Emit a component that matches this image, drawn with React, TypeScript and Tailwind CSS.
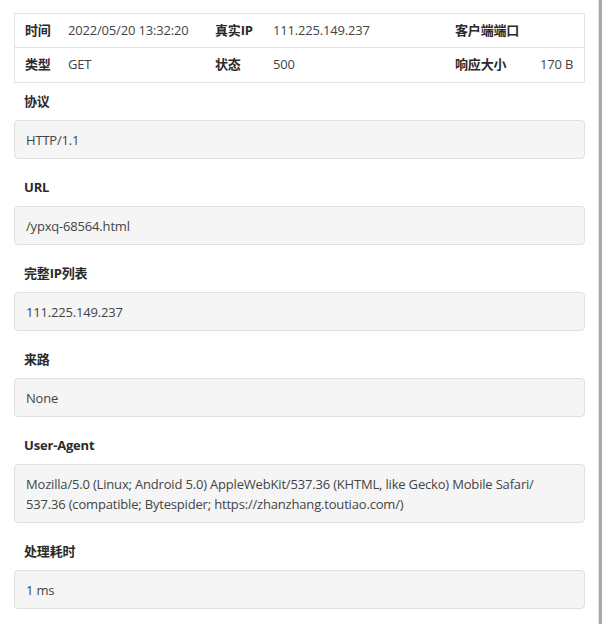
import type { ReactNode } from 'react';

const font = { fontFamily: '"Open Sans", "Noto Sans CJK SC", sans-serif' };

type Field = { label: string; value: ReactNode };

const fields: Field[] = [
  { label: '协议', value: 'HTTP/1.1' },
  { label: 'URL', value: '/ypxq-68564.html' },
  { label: '完整IP列表', value: '111.225.149.237' },
  { label: '来路', value: 'None' },
  {
    label: 'User-Agent',
    value: (
      <>
        Mozilla/5.0 (Linux; Android 5.0) AppleWebKit/537.36 (KHTML, like Gecko) Mobile Safari/
        <br />
        537.36 (compatible; Bytespider; https://zhanzhang.toutiao.com/)
      </>
    ),
  },
  { label: '处理耗时', value: '1 ms' },
];

function InfoRow({ cells, last }: { cells: [string, string][]; last?: boolean }) {
  const widths = ['w-[43px]', 'w-[147px]', 'w-[58px]', 'w-[182px]', 'w-[85px]', 'w-[54px]'];
  const flat = cells.flat();
  return (
    <div className={`flex h-[34px] items-center ${last ? '' : 'border-b border-[#e2e2e2]'}`}>
      {flat.map((text, i) => (
        <div
          key={i}
          className={`${widths[i]} shrink-0 whitespace-nowrap pl-[10px] text-[13px] ${
            i % 2 === 0 ? 'font-bold text-[#2a2a2a]' : 'text-[#444]'
          }`}
        >
          {text}
        </div>
      ))}
    </div>
  );
}

export default function App() {
  return (
    <div className="min-h-[624px] w-[602px] bg-white border-r-[3px] border-[#a8a8a8]" style={font}>
      <div className="min-h-[624px] border-r border-[#e6e6e6] pl-[14px] pr-[13px] pt-[13px] tracking-[-0.18px]">
        <div className="w-[571px] border border-[#e2e2e2]">
          <InfoRow
            cells={[
              ['时间', '2022/05/20 13:32:20'],
              ['真实IP', '111.225.149.237'],
              ['客户端端口', ''],
            ]}
          />
          <InfoRow
            last
            cells={[
              ['类型', 'GET'],
              ['状态', '500'],
              ['响应大小', '170 B'],
            ]}
          />
        </div>

        <div className="w-[571px] pt-[8px]">
          {fields.map((f) => (
            <div key={f.label} className="mb-[18px]">
              <div className="mb-[9px] pl-[10px] text-[13px] font-bold leading-[20px] text-[#2a2a2a]">{f.label}</div>
              <div className="whitespace-nowrap rounded-[4px] border border-[#e0e0e0] bg-[#f5f5f5] px-[11px] py-[8.5px] text-[13px] leading-[20px] text-[#444]">
                {f.value}
              </div>
            </div>
          ))}
        </div>
      </div>
    </div>
  );
}
